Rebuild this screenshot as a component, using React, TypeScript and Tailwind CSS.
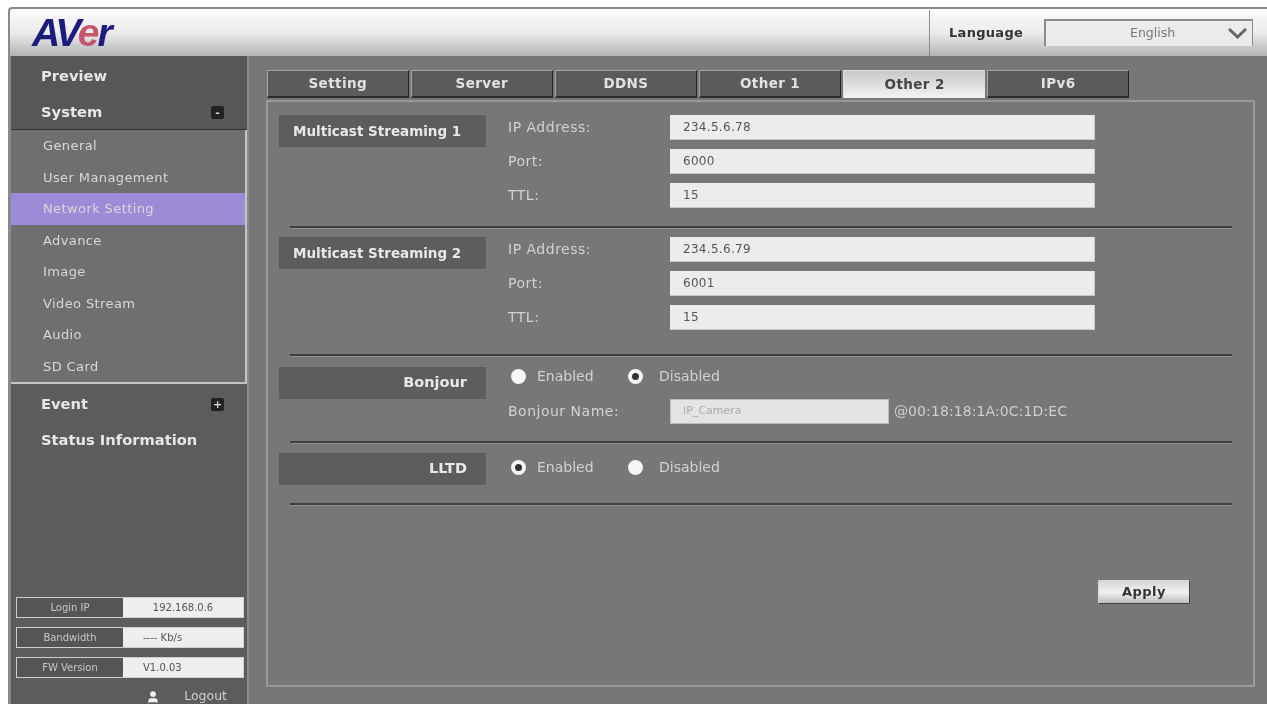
import { User } from "lucide-react";

const tabs = ["Setting", "Server", "DDNS", "Other 1", "Other 2", "IPv6"];
const subItems = ["General", "User Management", "Network Setting", "Advance", "Image", "Video Stream", "Audio", "SD Card"];
const stats = [
  { label: "Login IP", value: "192.168.0.6", center: true },
  { label: "Bandwidth", value: "---- Kb/s", center: false },
  { label: "FW Version", value: "V1.0.03", center: false },
];

const Divider = ({ className = "" }: { className?: string }) => (
  <div className={`ml-[22px] mr-[21px] h-[3px] border-t-2 border-[#3f3f3f] border-b border-b-[#8f8f8f] ${className}`} />
);

const SectionLabel = ({ text, right }: { text: string; right?: boolean }) => (
  <div
    className={`w-[207px] h-[32px] shrink-0 bg-[#5d5d5d] flex items-center font-bold text-[#e8e8e8] whitespace-nowrap ${
      right ? "justify-end pr-[19px] text-[14.5px]" : "pl-[14px] text-[13.5px]"
    }`}
  >
    {text}
  </div>
);

const Field = ({ label, value }: { label: string; value: string }) => (
  <div className="flex items-center h-[25px]">
    <span className="w-[162px] text-[14px] tracking-[0.5px] text-[#d2d2d2]">{label}</span>
    <div className="w-[425px] h-[25px] bg-[#ececea] border-b border-r border-[#c8c8c8] flex items-center pl-[13px] text-[12px] tracking-[0.3px] text-[#555]">
      {value}
    </div>
  </div>
);

const Radio = ({ checked, label, gap }: { checked: boolean; label: string; gap: string }) => (
  <div className="flex items-center w-[117px]">
    <span className="w-[15px] h-[15px] rounded-full bg-[#f6f6f6] flex items-center justify-center shrink-0">
      {checked && <span className="w-[7px] h-[7px] rounded-full bg-[#333]" />}
    </span>
    <span className={`text-[14px] text-[#d2d2d2] ${gap}`}>{label}</span>
  </div>
);

const Streaming = ({ title, ip, port }: { title: string; ip: string; port: string }) => (
  <div className="flex ml-[11px]">
    <SectionLabel text={title} />
    <div className="ml-[22px] flex flex-col gap-[9px]">
      <Field label="IP Address:" value={ip} />
      <Field label="Port:" value={port} />
      <Field label="TTL:" value="15" />
    </div>
  </div>
);

const SideHead = ({ text, icon }: { text: string; icon?: "minus" | "plus" }) => (
  <div className="h-[36px] flex items-center justify-between pl-[30px] pr-[23px] text-[14.7px] font-bold text-[#e6e6e6]">
    <span>{text}</span>
    {icon && (
      <span className="w-[13px] h-[13px] rounded-[2px] bg-[#222] flex items-center justify-center text-[11px] leading-none text-[#ddd]">
        {icon === "minus" ? "-" : "+"}
      </span>
    )}
  </div>
);

export default function App() {
  return (
    <div
      className="w-[1267px] h-[704px] overflow-hidden bg-white pl-[8px] pt-[7px] flex flex-col blur-[0.5px]"
      style={{ fontFamily: '"DejaVu Sans", sans-serif' }}
    >
      {/* header */}
      <div className="h-[49px] shrink-0 border-t-2 border-l-2 border-[#8a8a8a] rounded-tl-[4px] bg-gradient-to-b from-[#fbfbfb] via-[#ececec] to-[#b4b4b4] flex items-center">
        <div
          className="ml-[22px] text-[39px] font-bold italic leading-none tracking-[-2px] text-[#1c1c7c]"
          style={{ fontFamily: '"Liberation Sans", sans-serif' }}
        >
          AV<span className="text-[#c4566e]">e</span>r
        </div>
        <div className="ml-auto h-[46px] border-l border-[#8c8c8c] pl-[19px] flex items-center">
          <span className="w-[95px] text-[13px] font-bold tracking-[0.3px] text-[#333]">Language</span>
          <div className="w-[209px] h-[27px] mr-[14px] border-l-2 border-t-2 border-r border-[#8c8c8c] bg-[#ebebeb] flex items-center">
            <span className="ml-[84px] text-[12.5px] text-[#777]">English</span>
            <svg className="ml-auto mr-[5px]" width="19" height="11" viewBox="0 0 19 11">
              <path d="M1 1 L9.5 9 L18 1" fill="none" stroke="#666" strokeWidth="3" />
            </svg>
          </div>
        </div>
      </div>

      <div className="flex-1 flex min-h-0">
        {/* sidebar */}
        <div className="w-[239px] shrink-0 border-l-[3px] border-[#8a8a8a] flex flex-col bg-[#5c5c5c]">
          <div className="h-[74px] pt-[2px] border-b border-[#333] bg-[#575757]">
            <SideHead text="Preview" />
            <SideHead text="System" icon="minus" />
          </div>
          <div className="h-[254px] bg-[#6f6f6f] border-r-2 border-b-2 border-[#c4c4c4] flex flex-col">
            {subItems.map((item) => (
              <div
                key={item}
                className={`h-[31.6px] flex items-center pl-[32px] text-[13px] tracking-[0.4px] text-[#d8d8d8] ${
                  item === "Network Setting" ? "bg-[#9d8bd8]" : ""
                }`}
              >
                {item}
              </div>
            ))}
          </div>
          <div className="pt-[2px]">
            <SideHead text="Event" icon="plus" />
            <SideHead text="Status Information" />
          </div>
          <div className="mt-auto flex flex-col gap-[9px] pl-[5px] pr-[3px]">
            {stats.map((s) => (
              <div key={s.label} className="h-[21px] flex border border-[#cfcfcf] text-[10px]">
                <div className="w-[106px] bg-[#555] text-[#c8c8c8] flex items-center justify-center">{s.label}</div>
                <div
                  className={`flex-1 bg-[#eeeeec] text-[#555] flex items-center ${
                    s.center ? "justify-center" : "pl-[20px]"
                  }`}
                >
                  {s.value}
                </div>
              </div>
            ))}
          </div>
          <div className="h-[26px] shrink-0 pt-[11px] flex items-center justify-end pr-[20px] text-[12.5px] text-[#cfcfcf]">
            <User className="w-[14px] h-[14px] mr-[24px] text-[#eee]" fill="currentColor" />
            Logout
          </div>
        </div>

        {/* main */}
        <div className="flex-1 min-w-0 bg-[#777] border-l-2 border-[#8a8a8a] pl-[17px] pr-[12px] pt-[14px]">
          <div className="flex ml-[1px]">
            {tabs.map((tab) => (
              <div
                key={tab}
                className={`w-[141.5px] h-[28px] mr-[2.6px] shrink-0 flex items-center justify-center text-[13.5px] tracking-[0.4px] font-bold border-t border-l ${
                  tab === "Other 2"
                    ? "bg-gradient-to-b from-[#c9c9c9] to-[#f4f4f4] text-[#444] border-[#ddd]"
                    : "bg-[#5b5b5b] text-[#e2e2e2] border-[#a5a5a5] border-r border-r-[#222] border-b-2 border-b-[#2c2c2c]"
                }`}
              >
                {tab}
              </div>
            ))}
          </div>
          <div className="mt-[2px] h-[587px] border-2 border-[#999] pt-[13px]">
            <Streaming title="Multicast Streaming 1" ip="234.5.6.78" port="6000" />
            <Divider className="mt-[18px]" />
            <div className="mt-[8px]">
              <Streaming title="Multicast Streaming 2" ip="234.5.6.79" port="6001" />
            </div>
            <Divider className="mt-[24px]" />

            <div className="mt-[10px] ml-[11px] flex">
              <SectionLabel text="Bonjour" right />
              <div className="ml-[22px]">
                <div className="h-[18px] flex items-center ml-[3px]">
                  <Radio checked={false} label="Enabled" gap="ml-[11px]" />
                  <Radio checked label="Disabled" gap="ml-[16px]" />
                </div>
                <div className="mt-[14px] flex items-center h-[25px]">
                  <span className="w-[162px] text-[14px] tracking-[0.5px] text-[#d2d2d2]">Bonjour Name:</span>
                  <div className="w-[219px] h-[25px] bg-[#e4e4e2] border border-[#bdbdbd] flex items-center pl-[12px] text-[11px] text-[#aaa]">
                    IP_Camera
                  </div>
                  <span className="ml-[5px] text-[14px] tracking-[0.1px] text-[#cfcfcf] whitespace-nowrap">
                    @00:18:18:1A:0C:1D:EC
                  </span>
                </div>
              </div>
            </div>
            <Divider className="mt-[17px]" />

            <div className="mt-[9px] ml-[11px] flex">
              <SectionLabel text="LLTD" right />
              <div className="ml-[25px] h-[18px] flex items-center mt-[5px]">
                <Radio checked label="Enabled" gap="ml-[11px]" />
                <Radio checked={false} label="Disabled" gap="ml-[16px]" />
              </div>
            </div>
            <Divider className="mt-[18px]" />

            <div className="mt-[74px] flex justify-end pr-[63px]">
              <button className="w-[92px] h-[24px] rounded-[2px] border border-[#d8d8d8] border-b-[#444] border-r-[#444] bg-gradient-to-b from-[#d5d5d5] via-[#f2f2f2] to-[#bdbdbd] text-[13px] font-bold tracking-[0.5px] text-[#333]">
                Apply
              </button>
            </div>
          </div>
        </div>
      </div>
    </div>
  );
}
